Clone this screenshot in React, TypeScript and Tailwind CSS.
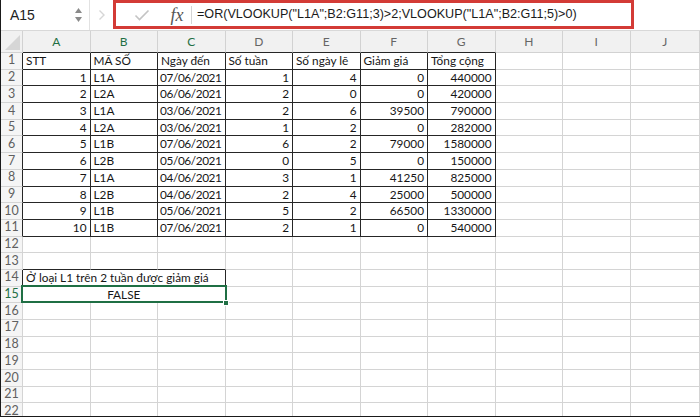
import React from "react";

const COLS = ["A", "B", "C", "D", "E", "F", "G", "H", "I", "J"];
const DARK = "#262626";
const GRID = "#d4d4d4";

type Cell = { v: string; right?: boolean; tight?: boolean };

const data: (string | number)[][] = [
  [1, "L1A", "07/06/2021", 1, 4, 0, 440000],
  [2, "L2A", "06/06/2021", 2, 0, 0, 420000],
  [3, "L1A", "03/06/2021", 2, 6, 39500, 790000],
  [4, "L2A", "03/06/2021", 1, 2, 0, 282000],
  [5, "L1B", "07/06/2021", 6, 2, 79000, 1580000],
  [6, "L2B", "05/06/2021", 0, 5, 0, 150000],
  [7, "L1A", "04/06/2021", 3, 1, 41250, 825000],
  [8, "L2B", "04/06/2021", 2, 4, 25000, 500000],
  [9, "L1B", "05/06/2021", 5, 2, 66500, 1330000],
  [10, "L1B", "07/06/2021", 2, 1, 0, 540000],
];

const headers = ["STT", "MÃ SỐ", "Ngày đến", "Số tuần", "Số ngày lẽ", "Giảm giá", "Tổng cộng"];

function rowCells(r: number): Cell[] {
  if (r === 1) return headers.map((h) => ({ v: h }));
  if (r >= 2 && r <= 11) {
    const d = data[r - 2];
    return d.map((x, i) => ({
      v: String(x),
      right: i !== 1,
      tight: i === 2,
    }));
  }
  return [];
}

function RowHeader({ n, dark }: { n: number; dark: boolean }) {
  return (
    <div
      className={`w-[22px] shrink-0 flex items-center justify-center bg-[#f5f5f5] border-b border-r text-[12.5px] ${
        n === 15 ? "text-[#1f6f44]" : "text-[#5f5f5f]"
      }`}
      style={{ borderRightColor: dark ? DARK : GRID, borderBottomColor: GRID }}
    >
      {n}
    </div>
  );
}

export default function App() {
  const rows = Array.from({ length: 22 }, (_, i) => i + 1);
  return (
    <div
      className="w-[700px] h-[417px] overflow-hidden bg-white border-l border-b border-[#1a1a1a] flex flex-col"
      style={{ fontFamily: "Lato, 'Noto Sans', sans-serif" }}
    >
      {/* Formula bar */}
      <div
        className="h-[31px] shrink-0 flex items-center border-b border-[#d8d8d8] bg-white"
        style={{ fontFamily: "'Liberation Sans', Arial, sans-serif" }}
      >
        <div className="w-[89px] h-full flex items-center justify-between pl-[9px] pr-[6px] border-r border-[#e2e2e2]">
          <span className="text-[14px] text-[#222]">A15</span>
          <svg width="9" height="18" viewBox="0 0 9 18">
            <path d="M4.5 2 L8 7 L1 7 Z" fill="#8a8a8a" />
            <path d="M4.5 16 L8 11 L1 11 Z" fill="#8a8a8a" />
          </svg>
        </div>
        <div className="w-[23px] h-full flex items-center justify-center">
          <svg width="8" height="12" viewBox="0 0 8 12">
            <path d="M1.5 1.5 L6 6 L1.5 10.5" fill="none" stroke="#d6d6d6" strokeWidth="1.4" />
          </svg>
        </div>
        <div className="w-[521px] h-[29px] mt-[-1px] border-[3px] border-[#d33b36] flex items-center">
          <div className="w-[48px] flex items-center justify-center pl-[4px]">
            <svg width="16" height="12" viewBox="0 0 16 12">
              <path d="M1.5 6.5 L5.5 10.5 L14.5 1.5" fill="none" stroke="#c4c4c4" strokeWidth="1.6" />
            </svg>
          </div>
          <div className="w-[26px] flex items-center justify-center">
            <span
              className="italic text-[18px] text-[#555] leading-none"
              style={{ fontFamily: "'Liberation Serif', 'DejaVu Serif', serif" }}
            >
              fx
            </span>
          </div>
          <div className="w-px h-[18px] bg-[#d4d4d4] ml-[1px]" />
          <span className="pl-[5px] text-[12.6px] text-[#1a1a1a] whitespace-nowrap">
            =OR(VLOOKUP("L1A";B2:G11;3)&gt;2;VLOOKUP("L1A";B2:G11;5)&gt;0)
          </span>
        </div>
        <div className="flex-1" />
      </div>

      {/* Column header */}
      <div className="h-[22px] shrink-0 flex bg-[#f1f1f1]">
        <div className="w-[22px] shrink-0 border-r border-b border-[#d2d2d2] flex items-end justify-end pr-[1px] pb-[2px]">
          <svg width="16" height="15" viewBox="0 0 16 15">
            <path d="M15 0 L15 15 L0 15 Z" fill="#d6d6d6" />
          </svg>
        </div>
        {COLS.map((c, i) => (
          <div
            key={c}
            className={`${i === 9 ? "flex-1" : "w-[67.5px] shrink-0"} border-r border-b flex items-center justify-center text-[12px] ${
              i <= 2 ? "text-[#1f6f44]" : "text-[#666]"
            }`}
            style={{
              borderRightColor: "#d2d2d2",
              borderBottomColor: i <= 6 ? DARK : "#d2d2d2",
            }}
          >
            {c}
          </div>
        ))}
      </div>

      {/* Rows */}
      <div className="flex flex-col text-[11.8px] text-[#161616]">
        {rows.map((r) => {
          const inTable = r >= 1 && r <= 11;
          if (r === 14 || r === 15) {
            return (
              <div key={r} className="h-[16.7px] shrink-0 flex">
                <RowHeader n={r} dark={r === 14} />
                <div
                  className={`w-[202.5px] shrink-0 border-r border-b flex items-center relative whitespace-nowrap ${
                    r === 15 ? "justify-center" : "pl-[3px]"
                  }`}
                  style={{ borderRightColor: DARK, borderBottomColor: DARK }}
                >
                  {r === 14 ? "Ở loại L1 trên 2 tuần được giảm giá" : "FALSE"}
                  {r === 15 && (
                    <>
                      <div className="absolute left-[-2px] top-[-2px] right-[-2px] bottom-[-1px] border-2 border-[#1f6f44] pointer-events-none" />
                      <div className="absolute right-[-4px] bottom-[-4px] w-[6px] h-[6px] bg-[#1f6f44] border border-white" />
                    </>
                  )}
                </div>
                {COLS.slice(3).map((c, i) => (
                  <div
                    key={c}
                    className={`${i === 6 ? "flex-1" : "w-[67.5px] shrink-0"} border-r border-b`}
                    style={{ borderColor: GRID }}
                  />
                ))}
              </div>
            );
          }
          const cells = rowCells(r);
          return (
            <div key={r} className="h-[16.7px] shrink-0 flex">
              <RowHeader n={r} dark={inTable} />
              {COLS.map((c, i) => {
                const cell = cells[i];
                const dark = inTable && i <= 6;
                const bottomDark = dark || (r === 13 && i <= 2);
                return (
                  <div
                    key={c}
                    className={`${i === 9 ? "flex-1" : "w-[67.5px] shrink-0"} border-r border-b flex items-center overflow-visible whitespace-nowrap ${
                      cell?.right ? "justify-end pr-[3px]" : "pl-[3px]"
                    } ${cell?.tight ? "tracking-[-0.4px]" : ""}`}
                    style={{
                      borderRightColor: dark ? DARK : GRID,
                      borderBottomColor: bottomDark ? DARK : GRID,
                    }}
                  >
                    {cell?.v}
                  </div>
                );
              })}
            </div>
          );
        })}
      </div>
    </div>
  );
}
